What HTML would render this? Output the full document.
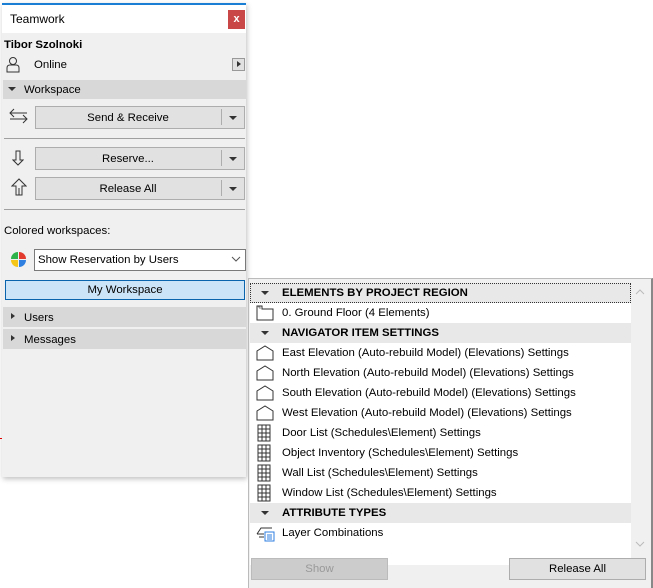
<!DOCTYPE html>
<html><head><meta charset="utf-8"><style>
*{box-sizing:border-box;margin:0;padding:0}
body{width:653px;height:588px;background:#fff;position:relative;overflow:hidden;font-family:"Liberation Sans",sans-serif;font-size:11.4px;color:#000}
.a{position:absolute}
.btn{position:absolute;background:#e1e1e1;border:1px solid #adadad;text-align:center;line-height:22px}
.dd{position:absolute;width:1px;height:16px;top:2px;background:#adadad}
.tri{position:absolute;width:0;height:0;border-left:4px solid transparent;border-right:4px solid transparent;border-top:4px solid #333}
.hd{position:absolute;left:250px;width:381px;height:20px;background:#e8e8e8;font-weight:bold;line-height:21px;padding-left:32px}
.row{position:absolute;left:250px;width:381px;height:20px;line-height:21px;padding-left:32px}
.row svg{position:absolute;left:6px;top:2px}
</style></head><body>
<div class="a" style="left:2px;top:3px;width:244px;height:474px;background:#f0f0f0;box-shadow:1px 2px 5px rgba(0,0,0,.25)"></div>
<div class="a" style="left:2px;top:3px;width:244px;height:2px;background:#1a7fd4"></div>
<div class="a" style="left:2px;top:5px;width:244px;height:28px;background:#fff"></div>
<div class="a" style="left:10px;top:12px;font-size:12px">Teamwork</div>
<div class="a" style="left:228px;top:10px;width:17px;height:19px;background:#c94747;color:#fff;text-align:center;line-height:18px;font-size:11px;font-weight:bold">x</div>
<div class="a" style="left:4px;top:39px;font-weight:bold">Tibor Szolnoki</div>
<svg class="a" style="left:6px;top:56px" width="14" height="17"><circle cx="7" cy="5" r="3.5" fill="none" stroke="#333"/><path d="M1 16 V12 Q1 9 4 9 H10 Q13 9 13 12 V16 Z" fill="none" stroke="#333"/></svg>
<div class="a" style="left:34px;top:59px">Online</div>
<div class="a" style="left:232px;top:58px;width:13px;height:13px;border:1px solid #999;background:#e1e1e1"></div>
<div class="a" style="left:237px;top:61px;border-top:3.5px solid transparent;border-bottom:3.5px solid transparent;border-left:4px solid #333"></div>
<div class="a" style="left:3px;top:80px;width:243px;height:19px;background:#d8d8d8"></div>
<div class="tri" style="left:8px;top:87px"></div>
<div class="a" style="left:24px;top:84px">Workspace</div>
<svg class="a" style="left:9px;top:108px" width="20" height="16"><path d="M1 5 H18 M5 1 L1 5 L5 9 M1 11 H18 M14 7 L18 11 L14 15" fill="none" stroke="#333"/></svg>
<div class="btn" style="left:35px;top:106px;width:210px;height:23px;padding-right:24px">Send &amp; Receive</div>
<div class="dd" style="left:221px;top:109px"></div><div class="tri" style="left:229px;top:116px"></div>
<div class="a" style="left:4px;top:138px;width:241px;height:1px;background:#a0a0a0"></div>
<svg class="a" style="left:12px;top:150px" width="12" height="16"><path d="M4 1 H8 V10 H11 L6 15 L1 10 H4 Z" fill="none" stroke="#333"/></svg>
<div class="btn" style="left:35px;top:147px;width:210px;height:23px;padding-right:24px">Reserve...</div>
<div class="dd" style="left:221px;top:150px"></div><div class="tri" style="left:229px;top:157px"></div>
<svg class="a" style="left:11px;top:178px" width="16" height="18"><path d="M5 17 V8 H1 L8 1 L15 8 H11 V17 Z M8 17 V10" fill="none" stroke="#333"/></svg>
<div class="btn" style="left:35px;top:177px;width:210px;height:23px;padding-right:24px">Release All</div>
<div class="dd" style="left:221px;top:180px"></div><div class="tri" style="left:229px;top:187px"></div>
<div class="a" style="left:4px;top:209px;width:241px;height:1px;background:#a0a0a0"></div>
<div class="a" style="left:4px;top:225px">Colored workspaces:</div>
<svg class="a" style="left:11px;top:252px" width="15" height="15"><path d="M7 7 L7 0 A7 7 0 0 0 0 7 Z" fill="#2db34a"/><path d="M8 7 L8 0 A7 7 0 0 1 15 7 Z" fill="#e23b2e"/><path d="M7 8 L0 8 A7 7 0 0 0 7 15 Z" fill="#f5c518"/><path d="M8 8 L15 8 A7 7 0 0 1 8 15 Z" fill="#2f7fe0"/></svg>
<div class="a" style="left:34px;top:249px;width:212px;height:22px;background:#fff;border:1px solid #7a7a7a;line-height:21px;padding-left:3px">Show Reservation by Users</div>
<svg class="a" style="left:231px;top:256px" width="10" height="7"><path d="M1 1 L5 5 L9 1" fill="none" stroke="#555"/></svg>
<div class="a" style="left:5px;top:280px;width:240px;height:20px;background:#cce4f7;border:1px solid #0a64ad;text-align:center;line-height:19px">My Workspace</div>
<div class="a" style="left:3px;top:307px;width:243px;height:20px;background:#d8d8d8"></div>
<div class="a" style="left:11px;top:313px;border-top:3.5px solid transparent;border-bottom:3.5px solid transparent;border-left:4px solid #333"></div>
<div class="a" style="left:24px;top:312px">Users</div>
<div class="a" style="left:3px;top:329px;width:243px;height:20px;background:#d8d8d8"></div>
<div class="a" style="left:11px;top:335px;border-top:3.5px solid transparent;border-bottom:3.5px solid transparent;border-left:4px solid #333"></div>
<div class="a" style="left:24px;top:334px">Messages</div>
<div class="a" style="left:0;top:438px;width:2px;height:1px;background:#d00"></div>
<div class="a" style="left:248px;top:278px;width:405px;height:310px;background:#f0f0f0;border-left:1px solid #bbb;border-top:1px solid #bbb;border-right:2px solid #888"></div>
<div class="a" style="left:250px;top:283px;width:381px;height:282px;background:#fff"></div>
<div class="a" style="left:631px;top:283px;width:19px;height:282px;background:#f0f0f0"></div>
<svg class="a" style="left:635px;top:289px" width="10" height="6"><path d="M1 5 L5 1 L9 5" fill="none" stroke="#bbb"/></svg>
<svg class="a" style="left:635px;top:541px" width="10" height="6"><path d="M1 1 L5 5 L9 1" fill="none" stroke="#bbb"/></svg>
<div class="hd" style="top:283px;border:1px dotted #333;padding-left:31px;line-height:19px">ELEMENTS BY PROJECT REGION</div><div class="tri" style="left:261px;top:291px"></div>
<div class="row" style="top:303px"><svg width="18" height="16"><path d="M1 1 H6 V4 H17 V15 H1 Z" fill="none" stroke="#333"/><path d="M2 2 H4 V4" fill="none" stroke="#333" stroke-width=".6"/></svg>0. Ground Floor (4 Elements)</div>
<div class="hd" style="top:323px">NAVIGATOR ITEM SETTINGS</div><div class="tri" style="left:261px;top:331px"></div>
<div class="row" style="top:343px"><svg width="18" height="16"><path d="M1 15 V6 L9 1 L17 6 V15 Z" fill="none" stroke="#333"/></svg>East Elevation (Auto-rebuild Model) (Elevations) Settings</div>
<div class="row" style="top:363px"><svg width="18" height="16"><path d="M1 15 V6 L9 1 L17 6 V15 Z" fill="none" stroke="#333"/></svg>North Elevation (Auto-rebuild Model) (Elevations) Settings</div>
<div class="row" style="top:383px"><svg width="18" height="16"><path d="M1 15 V6 L9 1 L17 6 V15 Z" fill="none" stroke="#333"/></svg>South Elevation (Auto-rebuild Model) (Elevations) Settings</div>
<div class="row" style="top:403px"><svg width="18" height="16"><path d="M1 15 V6 L9 1 L17 6 V15 Z" fill="none" stroke="#333"/></svg>West Elevation (Auto-rebuild Model) (Elevations) Settings</div>
<div class="row" style="top:423px"><svg width="18" height="18" style="top:1px;left:7px"><path d="M1 1 H13 V17 H1 Z M1 5 H13 M1 9 H13 M1 13 H13 M5 1 V17 M9 1 V17" fill="none" stroke="#333"/></svg>Door List (Schedules\Element) Settings</div>
<div class="row" style="top:443px"><svg width="18" height="18" style="top:1px;left:7px"><path d="M1 1 H13 V17 H1 Z M1 5 H13 M1 9 H13 M1 13 H13 M5 1 V17 M9 1 V17" fill="none" stroke="#333"/></svg>Object Inventory (Schedules\Element) Settings</div>
<div class="row" style="top:463px"><svg width="18" height="18" style="top:1px;left:7px"><path d="M1 1 H13 V17 H1 Z M1 5 H13 M1 9 H13 M1 13 H13 M5 1 V17 M9 1 V17" fill="none" stroke="#333"/></svg>Wall List (Schedules\Element) Settings</div>
<div class="row" style="top:483px"><svg width="18" height="18" style="top:1px;left:7px"><path d="M1 1 H13 V17 H1 Z M1 5 H13 M1 9 H13 M1 13 H13 M5 1 V17 M9 1 V17" fill="none" stroke="#333"/></svg>Window List (Schedules\Element) Settings</div>
<div class="hd" style="top:503px">ATTRIBUTE TYPES</div><div class="tri" style="left:261px;top:511px"></div>
<div class="row" style="top:523px"><svg width="20" height="17"><path d="M1 9 L5 3 H16 M1 9 H8 M3 12 H8" fill="none" stroke="#333"/><rect x="9" y="7" width="9" height="9" fill="#fff" stroke="#2f7fe0"/><path d="M11 10 H16 M11 12 H16 M11 14 H16" stroke="#2f7fe0"/></svg>Layer Combinations</div>
<div class="btn" style="left:251px;top:558px;width:137px;height:22px;line-height:21px;color:#999;background:#ccc;border-color:#bbb">Show</div>
<div class="btn" style="left:509px;top:558px;width:137px;height:22px;line-height:21px">Release All</div>
</body></html>
